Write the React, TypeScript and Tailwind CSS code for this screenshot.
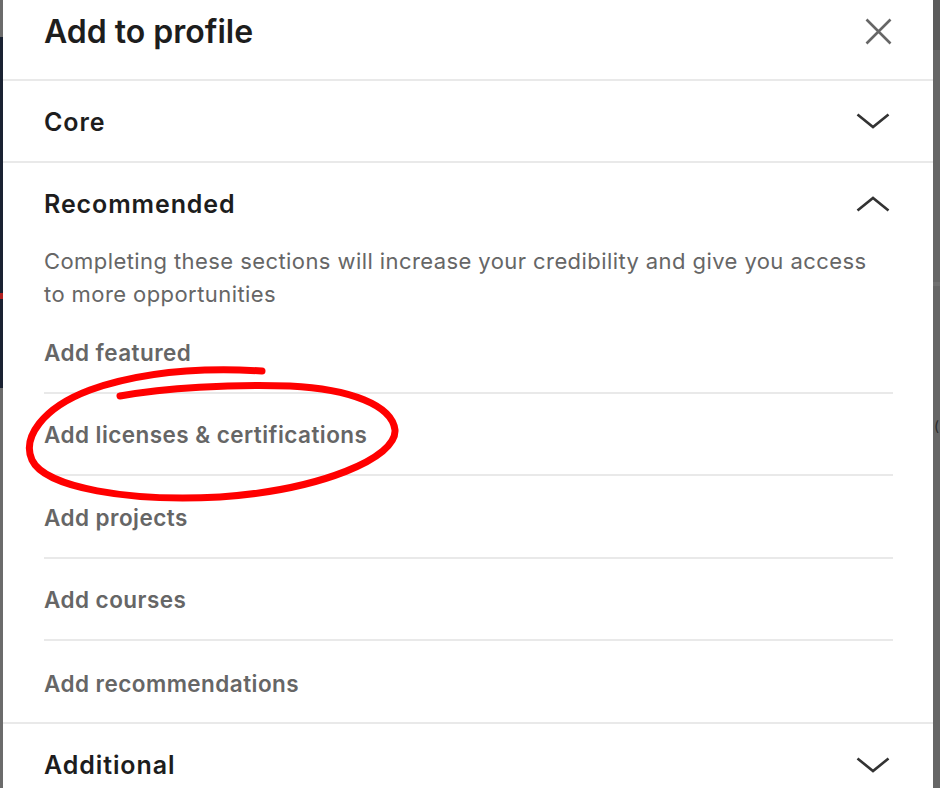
import React from "react";

function Chevron({ up }: { up?: boolean }) {
  return (
    <svg width="34" height="16" viewBox="0 0 34 16" className="shrink-0 mr-[3px]">
      <polyline
        points={up ? "1.5,14.5 17,2 32.5,14.5" : "1.5,1.5 17,14 32.5,1.5"}
        fill="none"
        stroke="#333333"
        strokeWidth="2.6"
        strokeLinecap="butt"
        strokeLinejoin="miter"
      />
    </svg>
  );
}

function CloseIcon() {
  return (
    <svg width="27" height="27" viewBox="0 0 27 27" className="shrink-0 mr-[1px]">
      <path d="M1.5 1.5 L25.5 25.5 M25.5 1.5 L1.5 25.5" stroke="#666666" strokeWidth="2.6" fill="none" />
    </svg>
  );
}

const items = ["Add featured", "Add licenses & certifications", "Add projects", "Add courses"];

export default function App() {
  return (
    <div
      className="relative flex w-[940px] h-[788px] overflow-hidden bg-[#666666]"
      style={{ fontFamily: "Inter, 'Noto Sans', 'Liberation Sans', sans-serif" }}
    >
      {/* left strip of page behind */}
      <div className="w-[3px] flex flex-col shrink-0">
        <div className="h-[37px] bg-[#6b6b6b]" />
        <div className="h-[351px] bg-[#1a2232] flex flex-col">
          <div className="h-[256px]" />
          <div className="h-[6px] bg-[#b02020]" />
        </div>
        <div className="flex-1 bg-[#6b6b6b]" />
      </div>

      {/* modal */}
      <div className="flex-1 bg-white flex flex-col">
        <div className="h-[81px] shrink-0 border-b-2 border-[#e9e9e9] pl-[41px] pr-[40px] pb-[16px] flex items-center justify-between">
          <h1 className="text-[32px] font-semibold text-[#1d1d1d] tracking-[0px]">Add to profile</h1>
          <CloseIcon />
        </div>

        <div className="h-[82px] shrink-0 border-b-2 border-[#e9e9e9] pl-[41px] pr-[40px] flex items-center justify-between">
          <span className="text-[25px] font-semibold text-[#1d1d1d] tracking-[0.9px] pt-[3px]">Core</span>
          <Chevron />
        </div>

        <div className="shrink-0 border-b-2 border-[#e9e9e9] flex flex-col">
          <div className="h-[82px] pl-[41px] pr-[40px] flex items-center justify-between">
            <span className="text-[25px] font-semibold text-[#1d1d1d] tracking-[0.9px] pt-[2px]">Recommended</span>
            <Chevron up />
          </div>
          <p className="pl-[41px] pr-[40px] text-[22px] leading-[33px] tracking-[0.42px] text-[#666666] h-[66px] whitespace-nowrap">
            Completing these sections will increase your credibility and give you access
            <br />
            to more opportunities
          </p>
          <div className="pl-[41px] pr-[40px] flex flex-col">
            {items.map((t) => (
              <div
                key={t}
                className="h-[82.5px] border-b-2 border-[#e9e9e9] flex items-center pt-[3px] text-[22.5px] font-semibold tracking-[0.45px] text-[#666666]"
              >
                {t}
              </div>
            ))}
            <div className="h-[81px] flex items-center pt-[4px] text-[22.5px] font-semibold tracking-[0.45px] text-[#666666]">
              Add recommendations
            </div>
          </div>
        </div>

        <div className="h-[82px] shrink-0 pl-[41px] pr-[40px] flex items-center justify-between">
          <span className="text-[25px] font-semibold text-[#1d1d1d] tracking-[0.9px] pt-[2px]">Additional</span>
          <Chevron />
        </div>
      </div>

      {/* right strip of page behind */}
      <div className="w-[7px] shrink-0 flex flex-col bg-[#666666]">
        <div className="h-[50px] bg-[#5c5c5c]" />
        <div className="h-[232px]" />
        <div className="h-[4px] bg-[#707070]" />
        <div className="pt-[132px] pl-[1px] text-[14px] leading-[16px] text-[#2a2a2a]">(</div>
      </div>

      {/* hand-drawn red ellipse annotation */}
      <svg
        className="absolute inset-0 pointer-events-none"
        width="940"
        height="788"
        viewBox="0 0 940 788"
      >
        <path
          d="M120,396 C165,388 230,384 290,386 C350,389 392,405 395,430 C397,458 320,490 220,497 C130,502 45,488 32,460 C22,438 42,408 90,390 C135,374 195,367 262,371"
          fill="none"
          stroke="#ff0000"
          strokeWidth="7"
          strokeLinecap="round"
          strokeLinejoin="round"
        />
      </svg>
    </div>
  );
}
